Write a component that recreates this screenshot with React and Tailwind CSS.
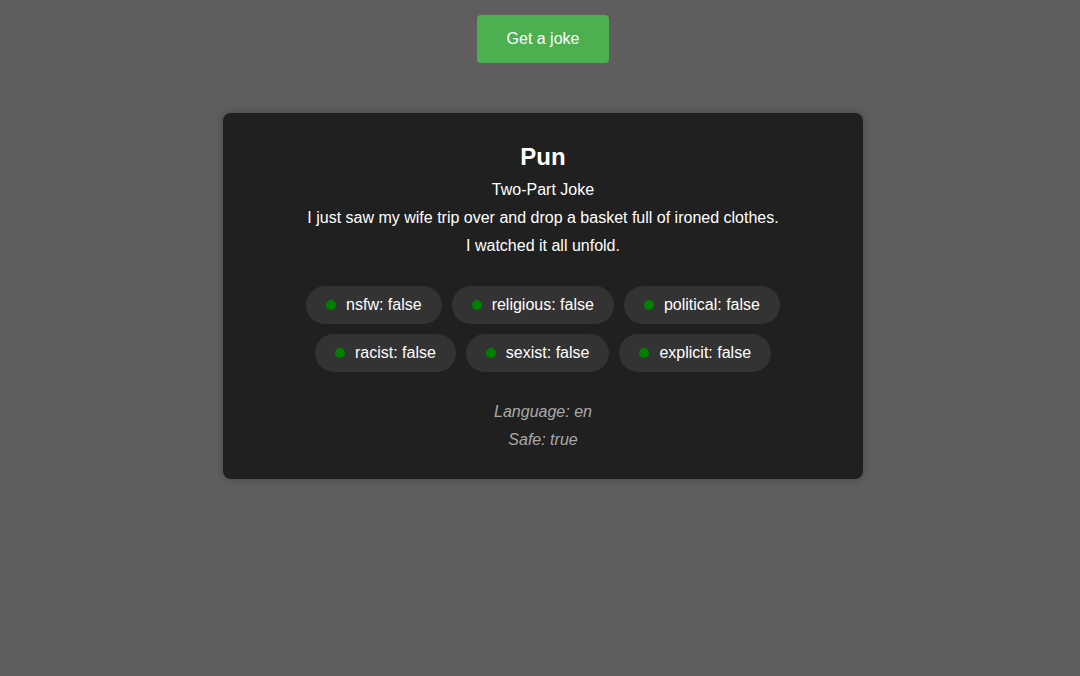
import React from "react";

const flags = [
  ["nsfw: false", "religious: false", "political: false"],
  ["racist: false", "sexist: false", "explicit: false"],
];

function Tag({ label }) {
  return (
    <div className="flex items-center h-[38px] pl-5 pr-5 rounded-full bg-[#333333] text-white text-[16px]">
      <span className="w-[10px] h-[10px] rounded-full bg-[#008000] mr-[10px]" />
      <span>{label}</span>
    </div>
  );
}

export default function App() {
  return (
    <div
      className="min-h-[676px] w-full bg-[#5f5d5e] flex flex-col items-center pt-[15px] pl-[6px]"
      style={{ fontFamily: '"Liberation Sans", Arial, sans-serif' }}
    >
      <button className="w-[132px] h-[48px] bg-[#4caf50] text-white text-[16px] rounded-[4px]">
        Get a joke
      </button>
      <div className="mt-[50px] w-[640px] bg-[#202020] rounded-[8px] shadow-[0_0_8px_rgba(0,0,0,0.25)] flex flex-col items-center pt-[29px] pb-[25px]">
        <h2 className="text-[24px] font-bold text-white leading-[30px]">Pun</h2>
        <div className="mt-[4px] text-white text-[16px] leading-[28px] flex flex-col items-center">
          <p>Two-Part Joke</p>
          <p>I just saw my wife trip over and drop a basket full of ironed clothes.</p>
          <p>I watched it all unfold.</p>
        </div>
        <div className="mt-[26px] flex flex-col items-center gap-[10px]">
          {flags.map((row, i) => (
            <div key={i} className="flex gap-[10px]">
              {row.map((f) => (
                <Tag key={f} label={f} />
              ))}
            </div>
          ))}
        </div>
        <div className="mt-[26px] flex flex-col items-center text-[#aaaaaa] italic text-[16px] leading-[28px]">
          <p>Language: en</p>
          <p>Safe: true</p>
        </div>
      </div>
    </div>
  );
}
